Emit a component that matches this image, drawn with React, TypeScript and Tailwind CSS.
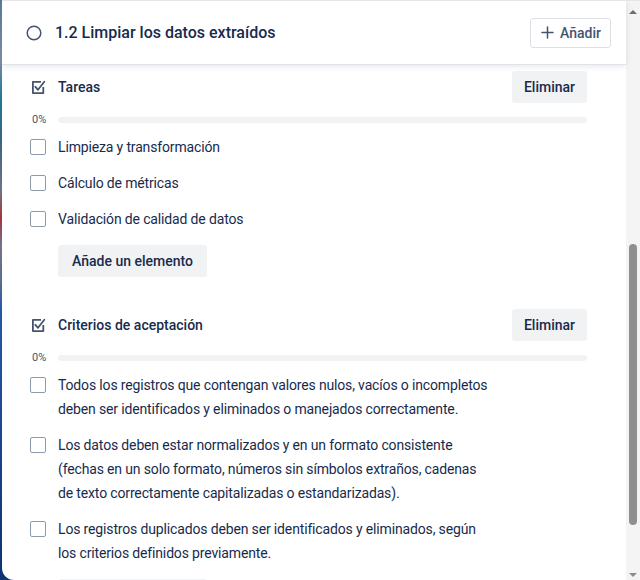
import React from "react";

type Section = {
  title: string;
  items: string[][];
};

const sections: Section[] = [
  {
    title: "Tareas",
    items: [["Limpieza y transformación"], ["Cálculo de métricas"], ["Validación de calidad de datos"]],
  },
  {
    title: "Criterios de aceptación",
    items: [
      [
        "Todos los registros que contengan valores nulos, vacíos o incompletos",
        "deben ser identificados y eliminados o manejados correctamente.",
      ],
      [
        "Los datos deben estar normalizados y en un formato consistente",
        "(fechas en un solo formato, números sin símbolos extraños, cadenas",
        "de texto correctamente capitalizadas o estandarizadas).",
      ],
      [
        "Los registros duplicados deben ser identificados y eliminados, según",
        "los criterios definidos previamente.",
      ],
    ],
  },
];

function ChecklistIcon() {
  return (
    <svg width="15" height="15" viewBox="0 0 15 15" fill="none" className="ml-px">
      <path d="M12.3 7V13.1H1.9V1.9H10" stroke="#44546f" strokeWidth="1.8" strokeLinejoin="round" />
      <path d="M4.4 6.8L7 9.8L13.3 1.8" stroke="#44546f" strokeWidth="1.8" strokeLinecap="round" strokeLinejoin="round" />
    </svg>
  );
}

function ChecklistSection({ section }: { section: Section }) {
  return (
    <div>
      <div className="flex h-8 items-center justify-between">
        <div className="flex items-center">
          <div className="flex w-7 shrink-0 items-center">
            <ChecklistIcon />
          </div>
          <span className="text-sm font-medium text-[#172b4d]">{section.title}</span>
        </div>
        <button type="button" className="h-8 w-[75px] rounded-[3px] bg-[#f1f2f4] text-sm font-medium text-[#172b4d]">
          Eliminar
        </button>
      </div>

      <div className="mt-[9px] flex h-4 items-center">
        <span className="w-7 shrink-0 pl-0.5 text-[11px] text-[#44546f]">0%</span>
        <div className="h-1.5 flex-1 rounded-full bg-[#f1f2f4]" />
      </div>

      <div className="mt-px">
        {section.items.map((lines, i) => (
          <div key={i} className="flex items-start py-1.5">
            <div className="flex h-6 w-7 shrink-0 items-center">
              <div className="h-4 w-4 rounded-[2px] border border-[#8c9bab] bg-white" />
            </div>
            <div className="text-sm leading-6 tracking-[-0.15px] text-[#172b4d]">
              {lines.map((line, j) => (
                <div key={j}>{line}</div>
              ))}
            </div>
          </div>
        ))}
      </div>

      <button type="button" className="ml-7 mt-2 h-8 w-[149px] rounded-[3px] bg-[#f1f2f4] text-sm font-medium text-[#172b4d]">
        Añade un elemento
      </button>
    </div>
  );
}

export default function App() {
  return (
    <div className="flex h-[580px] w-[640px] overflow-hidden bg-[linear-gradient(to_bottom,#56779c_0px,#7c8aa0_60px,#1f7896_100px,#3d6282_140px,#6f7488_190px,#a2353e_218px,#70758a_245px,#5c6e90_280px,#2657a8_310px,#0c3372_580px)] font-['Roboto',sans-serif]">
      <div className="ml-[2px] flex min-w-0 flex-1 overflow-hidden rounded-bl-xl border-t border-[#e4e6ea] bg-white">
        <div className="flex min-w-0 flex-1 flex-col">
          <header className="relative z-10 flex h-[64px] shrink-0 items-center justify-between border-b border-[#e1e3e8] bg-white pl-6 pr-[15px] shadow-[0_1px_6px_rgba(9,30,66,0.12)]">
            <div className="flex items-center gap-[13px]">
              <svg width="16" height="16" viewBox="0 0 16 16" fill="none">
                <circle cx="8" cy="8" r="6.8" stroke="#44546f" strokeWidth="1.5" />
              </svg>
              <h1 className="text-base font-medium text-[#172b4d]">1.2 Limpiar los datos extraídos</h1>
            </div>
            <button
              type="button"
              className="flex h-[30px] items-center gap-1.5 rounded-[3px] border border-[#dcdfe4] pl-2.5 pr-[9px] text-sm font-medium text-[#44546f]"
            >
              <svg width="13" height="13" viewBox="0 0 13 13" fill="none">
                <path d="M6.5 1V12M1 6.5H12" stroke="#44546f" strokeWidth="1.5" strokeLinecap="round" />
              </svg>
              Añadir
            </button>
          </header>

          <div className="flex-1 overflow-hidden pl-7 pr-[39px] pt-[6px]">
            <div className="space-y-8">
              {sections.map((s) => (
                <ChecklistSection key={s.title} section={s} />
              ))}
            </div>
          </div>
        </div>

        {/* scrollbar */}
        <div className="flex w-[14px] shrink-0 flex-col items-center bg-[#f4f4f4]">
          <div className="mt-[9px] h-0 w-0 border-x-[4px] border-b-[4px] border-x-transparent border-b-[#6e6e6e]" />
          <div className="mt-[230px] h-[281px] w-2 rounded-full bg-[#8f8f8f]" />
          <div className="mb-[3px] mt-auto h-0 w-0 border-x-[4px] border-t-[4px] border-x-transparent border-t-[#8c8c8c]" />
        </div>
      </div>
    </div>
  );
}
